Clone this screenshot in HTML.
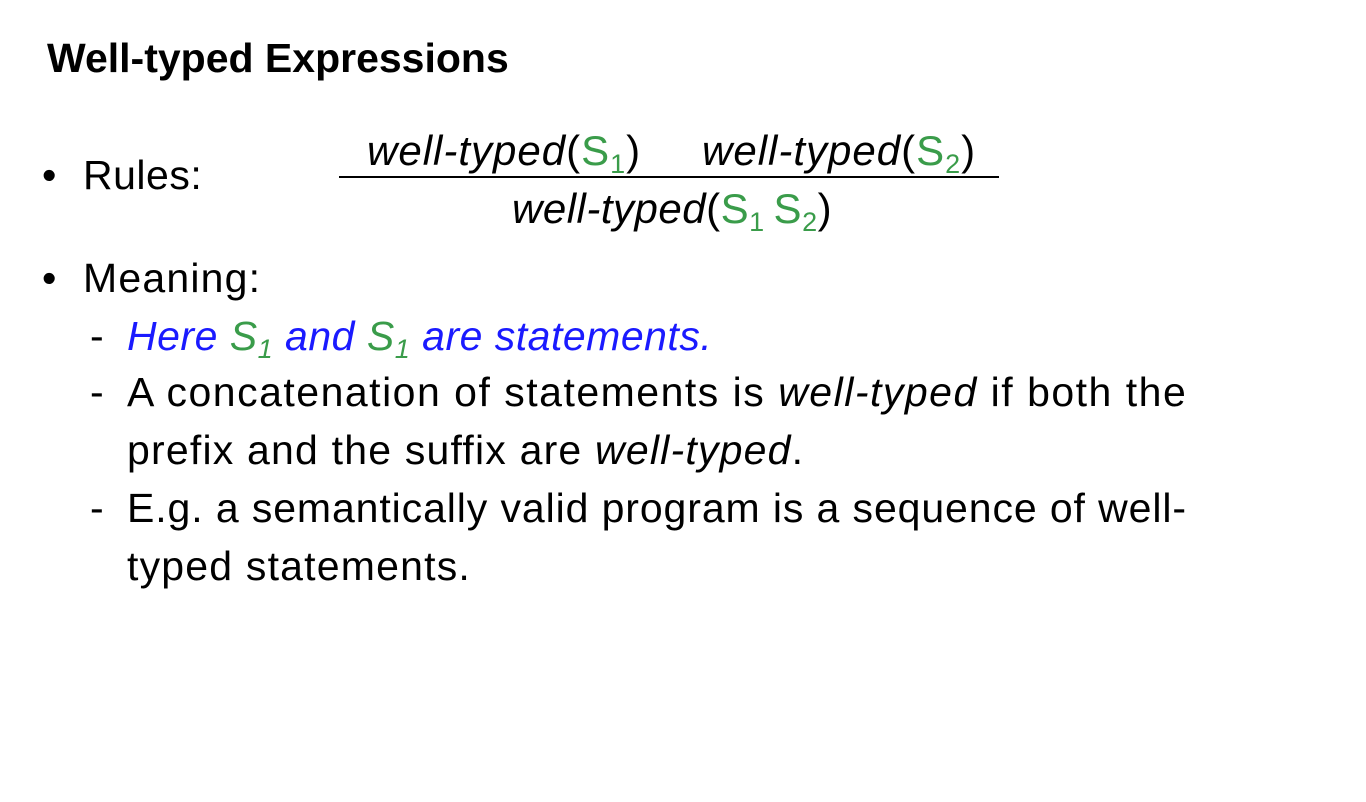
<!DOCTYPE html>
<html><head><meta charset="utf-8"><style>
body{margin:0;width:1366px;height:802px;background:#fff;position:relative;overflow:hidden;font-family:"Liberation Sans",sans-serif;color:#000}
.t{position:absolute;white-space:nowrap;line-height:50px;font-size:41px;letter-spacing:1.2px}
.g{color:#3a9c4a}
.b{color:#1a1aff;font-style:italic}
i{font-style:italic}
sub{font-size:27px;vertical-align:-8px;line-height:0}
</style></head><body>
<div class="t" style="left:47px;top:33px;font-weight:bold;font-size:41px;letter-spacing:0">Well-typed Expressions</div>
<div class="t" style="left:42px;top:150px">•</div>
<div class="t" style="left:83px;top:150px;letter-spacing:0.5px">Rules:</div>
<div class="t" style="left:367px;top:126px;font-size:42px;letter-spacing:1px"><i>well-typed</i>(<span class="g">S<sub>1</sub></span>)</div>
<div class="t" style="left:702px;top:126px;font-size:42px;letter-spacing:1px"><i>well-typed</i>(<span class="g">S<sub>2</sub></span>)</div>
<div style="position:absolute;left:339px;top:176px;width:660px;height:2px;background:#000"></div>
<div class="t" style="left:512px;top:184px;font-size:42px;letter-spacing:0.5px"><i>well-typed</i>(<span class="g">S<sub>1</sub>&#8201;S<sub>2</sub></span>)</div>
<div class="t" style="left:42px;top:253px">•</div>
<div class="t" style="left:83px;top:253px">Meaning:</div>
<div class="t" style="left:90px;top:311px">-</div>
<div class="t" style="left:127px;top:311px;letter-spacing:0.5px"><span class="b">Here <span class="g">S<sub>1</sub></span> and <span class="g">S<sub>1</sub></span> are statements.</span></div>
<div class="t" style="left:90px;top:367px">-</div>
<div class="t" style="left:127px;top:367px;letter-spacing:1.5px">A concatenation of statements is <i>well-typed</i> if both the</div>
<div class="t" style="left:127px;top:425px">prefix and the suffix are <i>well-typed</i>.</div>
<div class="t" style="left:90px;top:483px">-</div>
<div class="t" style="left:127px;top:483px;letter-spacing:0.9px">E.g. a semantically valid program is a sequence of well-</div>
<div class="t" style="left:127px;top:541px">typed statements.</div>
</body></html>
